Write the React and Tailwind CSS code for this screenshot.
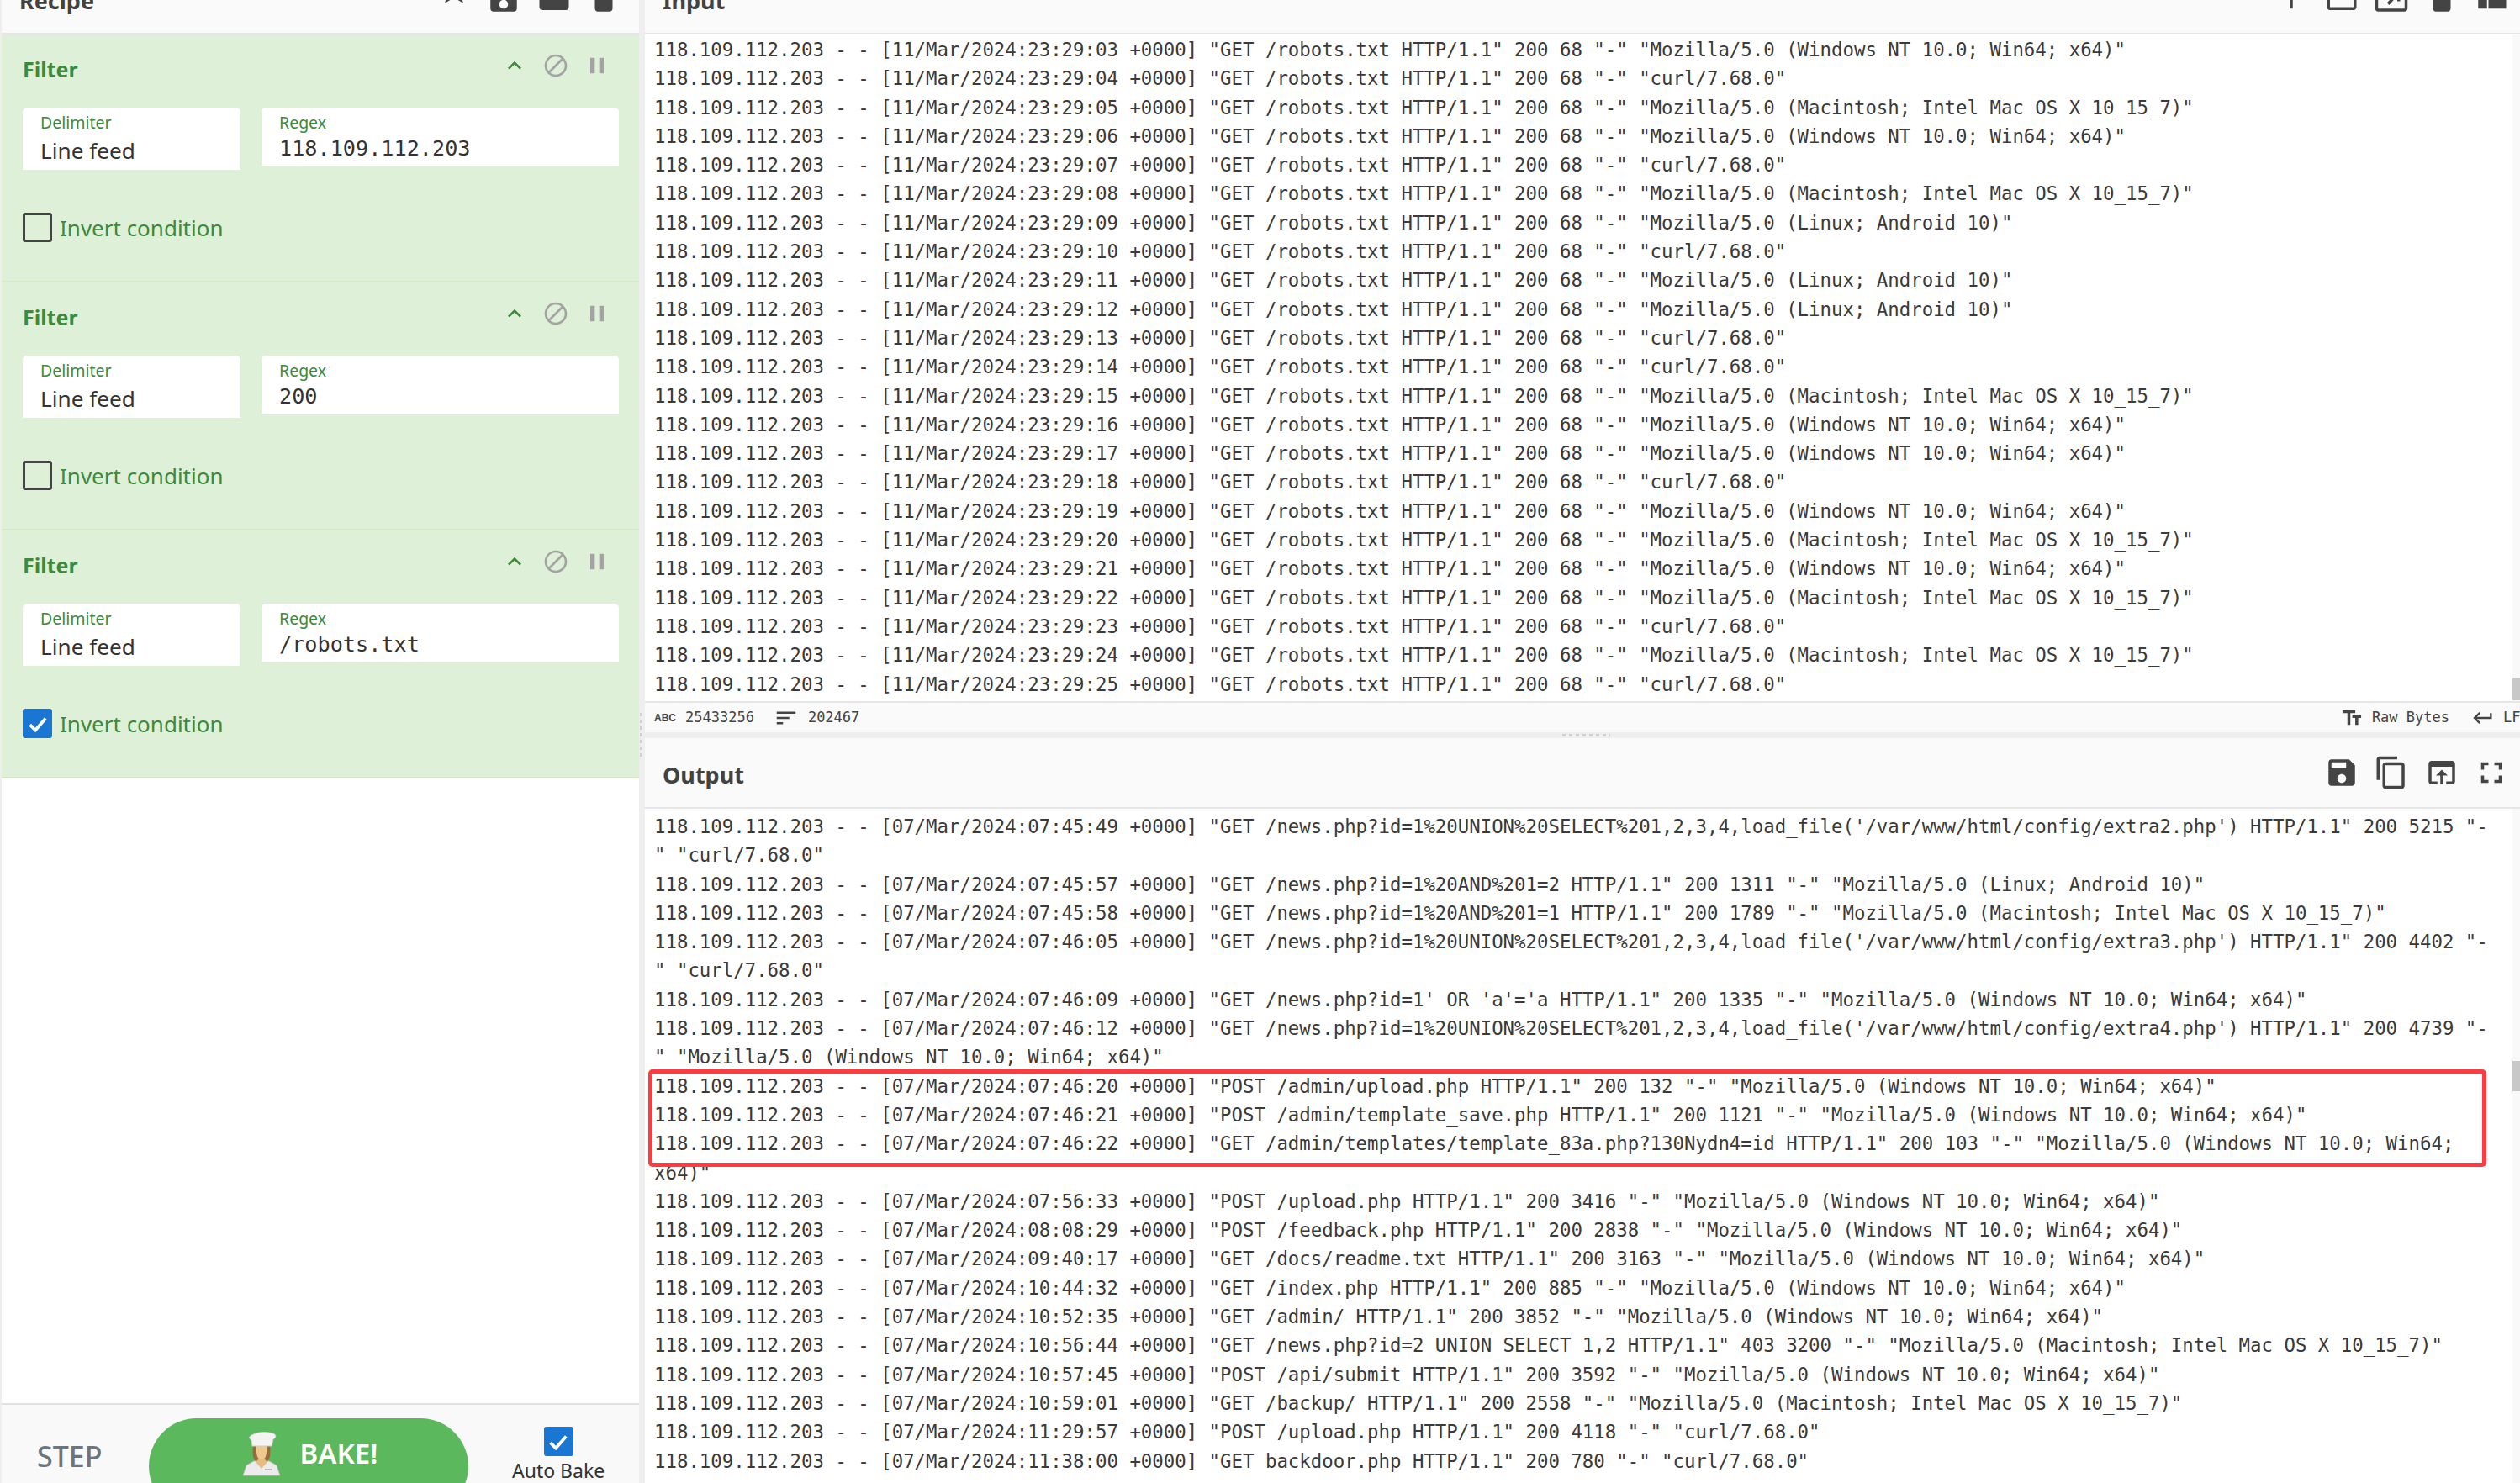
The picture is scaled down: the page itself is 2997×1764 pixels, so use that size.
const ip = '118.109.112.203 - - ';
const win = '"Mozilla/5.0 (Windows NT 10.0; Win64; x64)"';
const mac = '"Mozilla/5.0 (Macintosh; Intel Mac OS X 10_15_7)"';
const linux = '"Mozilla/5.0 (Linux; Android 10)"';
const curl = '"curl/7.68.0"';

const inputAgents = [
  win, curl, mac, win, curl, mac, linux, curl, linux, linux, curl, curl,
  mac, win, win, curl, win, mac, win, mac, curl, mac, curl,
];

const inputLines = inputAgents.map((agent, i) => {
  const sec = String(i + 3).padStart(2, '0');
  return `${ip}[11/Mar/2024:23:29:${sec} +0000] "GET /robots.txt HTTP/1.1" 200 68 "-" ${agent}`;
});

const outputLines = [
  `${ip}[07/Mar/2024:07:45:49 +0000] "GET /news.php?id=1%20UNION%20SELECT%201,2,3,4,load_file('/var/www/html/config/extra2.php') HTTP/1.1" 200 5215 "-`,
  `" ${curl}`,
  `${ip}[07/Mar/2024:07:45:57 +0000] "GET /news.php?id=1%20AND%201=2 HTTP/1.1" 200 1311 "-" ${linux}`,
  `${ip}[07/Mar/2024:07:45:58 +0000] "GET /news.php?id=1%20AND%201=1 HTTP/1.1" 200 1789 "-" ${mac}`,
  `${ip}[07/Mar/2024:07:46:05 +0000] "GET /news.php?id=1%20UNION%20SELECT%201,2,3,4,load_file('/var/www/html/config/extra3.php') HTTP/1.1" 200 4402 "-`,
  `" ${curl}`,
  `${ip}[07/Mar/2024:07:46:09 +0000] "GET /news.php?id=1' OR 'a'='a HTTP/1.1" 200 1335 "-" ${win}`,
  `${ip}[07/Mar/2024:07:46:12 +0000] "GET /news.php?id=1%20UNION%20SELECT%201,2,3,4,load_file('/var/www/html/config/extra4.php') HTTP/1.1" 200 4739 "-`,
  `" ${win}`,
  `${ip}[07/Mar/2024:07:46:20 +0000] "POST /admin/upload.php HTTP/1.1" 200 132 "-" ${win}`,
  `${ip}[07/Mar/2024:07:46:21 +0000] "POST /admin/template_save.php HTTP/1.1" 200 1121 "-" ${win}`,
  `${ip}[07/Mar/2024:07:46:22 +0000] "GET /admin/templates/template_83a.php?130Nydn4=id HTTP/1.1" 200 103 "-" "Mozilla/5.0 (Windows NT 10.0; Win64;`,
  'x64)"',
  `${ip}[07/Mar/2024:07:56:33 +0000] "POST /upload.php HTTP/1.1" 200 3416 "-" ${win}`,
  `${ip}[07/Mar/2024:08:08:29 +0000] "POST /feedback.php HTTP/1.1" 200 2838 "-" ${win}`,
  `${ip}[07/Mar/2024:09:40:17 +0000] "GET /docs/readme.txt HTTP/1.1" 200 3163 "-" ${win}`,
  `${ip}[07/Mar/2024:10:44:32 +0000] "GET /index.php HTTP/1.1" 200 885 "-" ${win}`,
  `${ip}[07/Mar/2024:10:52:35 +0000] "GET /admin/ HTTP/1.1" 200 3852 "-" ${win}`,
  `${ip}[07/Mar/2024:10:56:44 +0000] "GET /news.php?id=2 UNION SELECT 1,2 HTTP/1.1" 403 3200 "-" ${mac}`,
  `${ip}[07/Mar/2024:10:57:45 +0000] "POST /api/submit HTTP/1.1" 200 3592 "-" ${win}`,
  `${ip}[07/Mar/2024:10:59:01 +0000] "GET /backup/ HTTP/1.1" 200 2558 "-" ${mac}`,
  `${ip}[07/Mar/2024:11:29:57 +0000] "POST /upload.php HTTP/1.1" 200 4118 "-" ${curl}`,
  `${ip}[07/Mar/2024:11:38:00 +0000] "GET backdoor.php HTTP/1.1" 200 780 "-" ${curl}`,
];

const filters = [
  { regex: '118.109.112.203', inverted: false },
  { regex: '200', inverted: false },
  { regex: '/robots.txt', inverted: true },
];

const ICONS = {
  star: 'M22 9.24l-7.19-.62L12 2 9.19 8.63 2 9.24l5.46 4.73L5.82 21 12 17.27 18.18 21l-1.63-7.03L22 9.24zM12 15.4l-3.76 2.27 1-4.28-3.32-2.88 4.38-.38L12 6.1l1.71 4.04 4.38.38-3.32 2.88 1 4.28L12 15.4z',
  save: 'M17 3H5c-1.11 0-2 .9-2 2v14c0 1.1.89 2 2 2h14c1.1 0 2-.9 2-2V7l-4-4zm-5 16c-1.66 0-3-1.34-3-3s1.34-3 3-3 3 1.34 3 3-1.34 3-3 3zm3-10H5V5h10v4z',
  folder: 'M10 4H4c-1.1 0-1.99.9-1.99 2L2 18c0 1.1.9 2 2 2h16c1.1 0 2-.9 2-2V8c0-1.1-.9-2-2-2h-8l-2-2z',
  folderOpen: 'M20 6h-8l-2-2H4c-1.1 0-1.99.9-1.99 2L2 18c0 1.1.9 2 2 2h16c1.1 0 2-.9 2-2V8c0-1.1-.9-2-2-2zm0 12H4V8h16v10z',
  trash: 'M6 19c0 1.1.9 2 2 2h8c1.1 0 2-.9 2-2V7H6v12zM19 4h-3.5l-1-1h-5l-1 1H5v2h14V4z',
  add: 'M19 13h-6v6h-2v-6H5v-2h6V5h2v6h6v2z',
  fileIn: 'M3 3h18c1.1 0 2 .9 2 2v14c0 1.1-.9 2-2 2H3c-1.1 0-2-.9-2-2v-6h2v6h18V5H3v3H1V5c0-1.1.9-2 2-2zm6 12l6-6h-4V7h7v7h-2v-3.5L10.500 16.500z',
  layout: 'M3 19h6v-7H3v7zm7 0h12v-7H10v7zM3 5v6h19V5H3z',
  copy: 'M16 1H4c-1.1 0-2 .9-2 2v14h2V3h12V1zm3 4H8c-1.1 0-2 .9-2 2v14c0 1.1.9 2 2 2h11c1.1 0 2-.9 2-2V7c0-1.1-.9-2-2-2zm0 16H8V7h11v14z',
  openBrowser: 'M19 4H5c-1.11 0-2 .9-2 2v12c0 1.1.89 2 2 2h4v-2H5V8h14v10h-4v2h4c1.1 0 2-.9 2-2V6c0-1.1-.89-2-2-2zm-7 6l-4 4h3v6h2v-6h3l-4-4z',
  fullscreen: 'M7 14H5v5h5v-2H7v-3zm-2-4h2V7h3V5H5v5zm12 7h-3v2h5v-5h-2v3zM14 5v2h3v3h2V5h-5z',
  expandLess: 'M12 8l-6 6 1.41 1.41L12 10.830l4.590 4.580L18 14z',
  block: 'M12 2C6.480 2 2 6.480 2 12s4.480 10 10 10 10-4.480 10-10S17.520 2 12 2zM4 12c0-4.420 3.580-8 8-8 1.850 0 3.550.63 4.900 1.690L5.690 16.900C4.630 15.550 4 13.850 4 12zm8 8c-1.850 0-3.550-.63-4.900-1.690L18.310 7.100C19.370 8.450 20 10.150 20 12c0 4.420-3.580 8-8 8z',
  pause: 'M6 19h4V5H6v14zm8-14v14h4V5h-4z',
  textFields: 'M2.500 4v3h5v12h3V7h5V4h-13zm19 5h-9v3h3v7h3v-7h3V9z',
  returnArrow: 'M19 7v4H5.830l3.580-3.590L8 6l-6 6 6 6 1.410-1.410L5.830 13H21V7z',
  sortLines: 'M3 18h6v-2H3v2zM3 6v2h18V6H3zm0 7h12v-2H3v2z',
};

const Icon = ({ name, className }) => (
  <svg viewBox="0 0 24 24" fill="currentColor" className={className}>
    <path d={ICONS[name]} />
  </svg>
);

const PaneHeader = ({ title, icons, className }) => (
  <div className={`flex h-[84px] shrink-0 items-center justify-between border-b-2 border-[#e6e6e6] bg-[#fafafa] ${className}`}>
    <h2 className="pt-[7px] text-[27px] font-bold text-[#424242]">{title}</h2>
    <div className="flex gap-[17.5px] text-[#444444]">
      {icons.map((name) => (
        <Icon
          key={name}
          name={name}
          className={name === 'star' ? 'h-[42px] w-[42px] -translate-y-[10px]' : 'h-[42px] w-[42px]'}
        />
      ))}
    </div>
  </div>
);

const Checkbox = ({ checked }) =>
  checked ? (
    <div className="flex h-[35px] w-[35px] shrink-0 items-center justify-center rounded-[3px] bg-[#1976d2]">
      <svg viewBox="0 0 24 24" fill="none" stroke="white" strokeWidth="3.200" className="h-[28px] w-[28px]">
        <path d="M4 13l5.500 5.500L20 6.500" />
      </svg>
    </div>
  ) : (
    <div className="h-[35px] w-[35px] shrink-0 rounded-[3px] border-[3px] border-[#444444]" />
  );

const FilterBlock = ({ regex, inverted }) => (
  <div className="h-[295px] shrink-0 border-b-2 border-[#d6e9c6] bg-[#dff0d8] pl-[25px] pr-[24px]">
    <div className="flex h-[87px] items-center justify-between pr-[10px]">
      <span className="-mt-[3px] text-[25px] font-bold text-[#3c8a3c]">Filter</span>
      <div className="mb-[13px] flex items-center gap-[17px]">
        <Icon name="expandLess" className="h-[32px] w-[32px] text-[#3c8a3c]" />
        <Icon name="block" className="h-[32px] w-[32px] text-[#a3a3a3]" />
        <Icon name="pause" className="h-[32px] w-[32px] text-[#a3a3a3]" />
      </div>
    </div>
    <div className="flex items-start gap-[25px]">
      <div className="h-[74px] w-[259px] rounded-t-[5px] bg-white pl-[21px] pt-[4px]">
        <div className="text-[19.500px] leading-[28px] text-[#3c8a3c]">Delimiter</div>
        <div className="pt-[2px] text-[26.200px] leading-[35px] text-[#333333]">Line feed</div>
      </div>
      <div className="h-[70px] w-[425px] rounded-t-[5px] bg-white pl-[21px] pt-[4px]">
        <div className="text-[19.500px] leading-[28px] text-[#3c8a3c]">Regex</div>
        <div className="font-['DejaVu_Sans_Mono',monospace] text-[25.200px] leading-[34px] text-[#333333]">{regex}</div>
      </div>
    </div>
    <div className="mt-[50px] flex items-center gap-[9px]">
      <Checkbox checked={inverted} />
      <span className="pt-[2px] text-[26px] leading-[35px] text-[#3c8a3c]">Invert condition</span>
    </div>
  </div>
);

const ChefIcon = () => (
  <svg viewBox="0 0 48 54" className="h-[54px] w-[48px]">
    <path d="M2 52 L6 40 Q14 34 24 33 Q34 34 42 40 L46 52 Z" fill="#ececec" stroke="#bdbdbd" />
    <path d="M14 16 Q12 32 18 36 L30 36 Q36 32 34 16 Z" fill="#9a6a3a" />
    <path d="M17 17 Q17 30 24 37 Q31 30 31 17 Z" fill="#eec98d" />
    <path d="M17 36 L24 44 L31 36 L28 33 L20 33 Z" fill="#e6bd80" />
    <path d="M12 4 Q24 -2 38 2 Q44 5 38 9 L36 17 L13 17 L12 10 Q7 7 12 4 Z" fill="#f4f4f4" stroke="#cfcfcf" />
    <rect x="28" y="44" width="9" height="2" fill="#bdbdbd" />
  </svg>
);

const LogPane = ({ lines, className }) => (
  <div className={`relative min-h-0 overflow-hidden bg-white pl-[11px] font-['DejaVu_Sans_Mono',monospace] text-[22.360px] leading-[34.300px] text-[#3a3a3a] ${className}`}>
    {lines.map((line, i) => (
      <div key={i} className="whitespace-pre">{line}</div>
    ))}
    <div className="absolute bottom-0 right-0 top-0 w-[9px] bg-[#f9f9f9]" />
  </div>
);

const StatusBar = () => (
  <div className="flex h-[37px] shrink-0 items-center justify-between overflow-hidden border-t-2 border-[#e6e6e6] bg-[#fafafa] pl-[11px] font-['DejaVu_Sans_Mono',monospace] text-[17px] text-[#444444]">
    <div className="flex items-center">
      <span className="w-[37px] font-['Liberation_Sans',sans-serif] text-[12px] font-bold">ABC</span>
      <span>25433256</span>
      <Icon name="sortLines" className="ml-[26px] h-[30px] w-[30px] -translate-x-[3px]" />
      <span className="ml-[8px]">202467</span>
    </div>
    <div className="flex items-center">
      <Icon name="textFields" className="h-[28px] w-[28px]" />
      <span className="ml-[10px]">Raw Bytes</span>
      <Icon name="returnArrow" className="ml-[26px] h-[28px] w-[28px]" />
      <span className="ml-[10px] w-[20px] overflow-hidden">LF</span>
    </div>
  </div>
);

const App = () => {
  return (
    <div className="flex h-[1764px] overflow-hidden bg-white font-['Noto_Sans',sans-serif]">
      <aside className="-mt-[43px] flex h-[1807px] w-[760px] shrink-0 flex-col border-l-2 border-[#eeeeee]">
        <PaneHeader title="Recipe" icons={['star', 'save', 'folder', 'trash']} className="pl-[21px] pr-[21px]" />
        {filters.map((filter) => (
          <FilterBlock key={filter.regex} regex={filter.regex} inverted={filter.inverted} />
        ))}
        <div className="flex-1" />
        <div className="flex h-[95px] shrink-0 items-start overflow-hidden border-t-2 border-[#e2e2e2] bg-[#f9f9f9]">
          <span className="ml-[42px] mt-[38px] w-[133px] text-[34px] font-medium leading-[46px] text-[#6c757d]">STEP</span>
          <button className="mt-[16px] flex h-[114px] w-[380px] shrink-0 items-start justify-center gap-[22px] rounded-[57px] bg-[#5cb85c] pl-[2px] pt-[16px] text-[33px] font-semibold leading-[52px] text-white">
            <ChefIcon />
            <span>BAKE!</span>
          </button>
          <div className="ml-[52px] flex flex-col items-center pt-[26px]">
            <Checkbox checked />
            <span className="mt-[2px] whitespace-nowrap text-[23px] leading-[30px] text-[#333333]">Auto Bake</span>
          </div>
        </div>
      </aside>

      <div className="relative w-[7px] shrink-0 bg-[#eeeeee]">
        <div className="absolute left-[1px] top-[848px] h-[52px] w-[3px] bg-[repeating-linear-gradient(to_bottom,#cfcfcf_0,#cfcfcf_4px,transparent_4px,transparent_8px)]" />
      </div>

      <main className="relative -mt-[43px] flex h-[1807px] min-w-0 flex-1 flex-col">
        <PaneHeader title="Input" icons={['add', 'folderOpen', 'fileIn', 'trash', 'layout']} className="pl-[21px] pr-[13px]" />
        <LogPane lines={inputLines} className="h-[793px] shrink-0 pt-[1px]" />
        <StatusBar />
        <div className="relative h-[7px] shrink-0 bg-[#eeeeee]">
          <div className="absolute left-[1091px] top-[2px] h-[3px] w-[57px] bg-[repeating-linear-gradient(to_right,#cfcfcf_0,#cfcfcf_4px,transparent_4px,transparent_8px)]" />
        </div>
        <PaneHeader title="Output" icons={['save', 'copy', 'openBrowser', 'fullscreen']} className="pl-[21px] pr-[13px]" />
        <LogPane lines={outputLines} className="flex-1 pt-[4px]" />

        {/* scrollbar thumbs */}
        <div className="absolute right-0 top-[850px] h-[26px] w-[9px] bg-[#c8c8c8]" />
        <div className="absolute right-0 top-[1305px] h-[36px] w-[9px] bg-[#c8c8c8]" />

        {/* red annotation box */}
        <div className="absolute left-[4px] top-[1315px] h-[116px] w-[2186px] rounded-[5px] border-[5px] border-[#fb3c40]" />
      </main>
    </div>
  );
};

export default App;
